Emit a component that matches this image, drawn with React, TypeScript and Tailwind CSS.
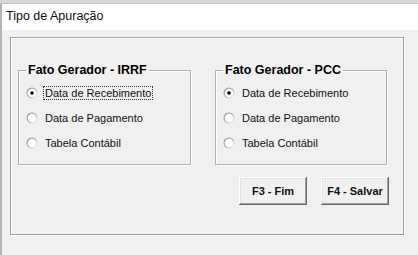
import React from "react";

const Radio = ({ checked }: { checked?: boolean }) => (
  <svg width="12" height="12" viewBox="0 0 12 12" className="shrink-0">
    <defs>
      <linearGradient id="rg" x1="0" y1="0" x2="1" y2="1">
        <stop offset="0" stopColor="#8c8c8c" />
        <stop offset="0.5" stopColor="#b4b4b4" />
        <stop offset="1" stopColor="#ffffff" />
      </linearGradient>
    </defs>
    <circle cx="6" cy="6" r="5.5" fill="url(#rg)" />
    <circle cx="6" cy="6" r="4.3" fill="#ffffff" />
    {checked && <circle cx="6" cy="6" r="1.8" fill="#000000" />}
  </svg>
);

const Option = ({ label, checked, focus }: { label: string; checked?: boolean; focus?: boolean }) => (
  <div className="flex h-[13px] items-center">
    <Radio checked={checked} />
    <span
      className={`ml-[5px] px-[1px] text-[11px] leading-[12px] text-[#111] border border-dotted ${
        focus ? "border-[#333]" : "border-transparent"
      }`}
    >
      {label}
    </span>
  </div>
);

const Group = ({ title, focus, width }: { title: string; focus?: boolean; width: string }) => (
  <div
    className={`relative h-[95px] ${width} border border-[#b0b0b0] shadow-[1px_1px_0_#fff,inset_1px_1px_0_#fff]`}
  >
    <span className="absolute left-[7px] top-[-8px] bg-[#f0f0f0] px-[2px] text-[12.5px] font-bold leading-[15px] text-black">
      {title}
    </span>
    <div className="flex flex-col gap-[12px] pl-[7px] pt-[15px]">
      <Option label="Data de Recebimento" checked focus={focus} />
      <Option label="Data de Pagamento" />
      <Option label="Tabela Contábil" />
    </div>
  </div>
);

const Btn = ({ label }: { label: string }) => (
  <button className="flex h-[28px] w-[68px] items-center justify-center bg-[#f0f0f0] text-[11px] font-bold text-[#111] shadow-[inset_-1px_-1px_0_#696969,inset_1px_1px_0_#ffffff,inset_-2px_-2px_0_#a0a0a0,inset_2px_2px_0_#e3e3e3]">
    {label}
  </button>
);

export default function App() {
  return (
    <div
      className="flex h-[255px] w-[418px] flex-col overflow-hidden bg-[#f0f0f0]"
      style={{ fontFamily: '"Liberation Sans", Arial, sans-serif' }}
    >
      <div className="h-[3px] bg-[#d8d8d8]" />
      <div className="h-px bg-[#c4c4c4]" />
      <div className="flex flex-1 border-l-2 border-[#b4b4b4]">
        <div className="flex flex-1 flex-col">
          <div className="flex h-[26px] items-center bg-white pl-[4px] pb-[2px] text-[12.5px] text-[#111]">
            Tipo de Apuração
          </div>
          <div className="flex-1 pl-[8px] pt-[7px]">
            <div className="h-[198px] w-[394px] border border-[#a0a0a0] shadow-[1px_1px_0_#fff,inset_1px_1px_0_#fff] pl-[7px] pt-[32px]">
              <div className="flex gap-[24px]">
                <Group title="Fato Gerador - IRRF" focus width="w-[173px]" />
                <Group title="Fato Gerador - PCC" width="w-[172px]" />
              </div>
              <div className="mt-[12px] flex justify-end gap-[14px] pr-[14px]">
                <Btn label="F3 - Fim" />
                <Btn label="F4 - Salvar" />
              </div>
            </div>
          </div>
        </div>
      </div>
    </div>
  );
}
